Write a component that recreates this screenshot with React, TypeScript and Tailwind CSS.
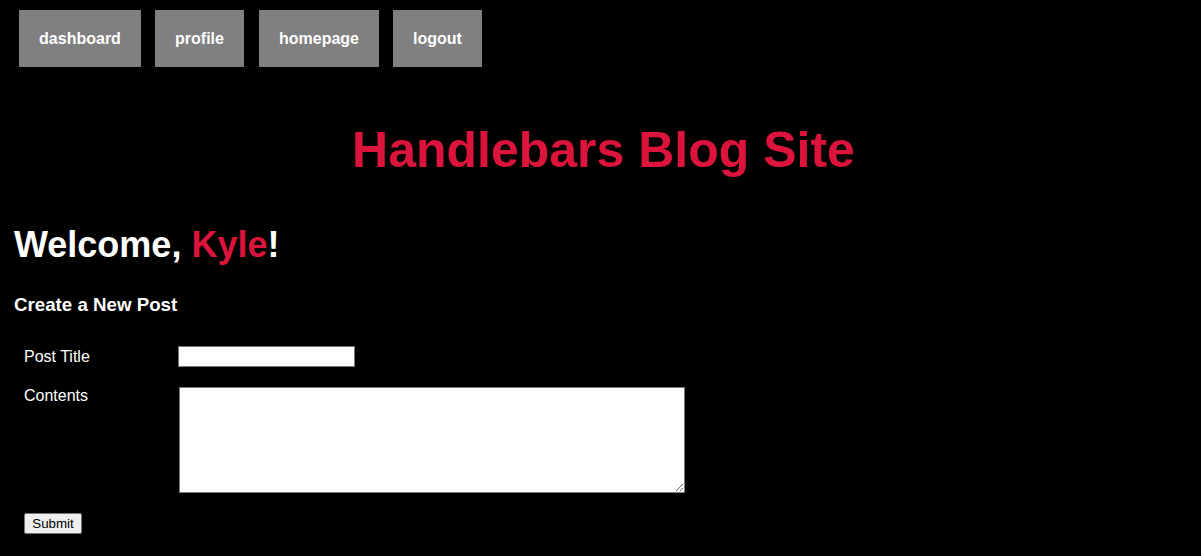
import React from "react";

export default function App() {
  const navs = [
    { label: "dashboard", c: "w-[122px]" },
    { label: "profile", c: "w-[89px] ml-[14px]" },
    { label: "homepage", c: "w-[120px] ml-[15px]" },
    { label: "logout", c: "w-[89px] ml-[14px]" },
  ];
  return (
    <div className="min-h-[556px] bg-black text-white font-['Liberation_Sans',Arial,sans-serif]">
      <nav className="flex pl-[19px] pt-[10px]">
        {navs.map((n) => (
          <a
            key={n.label}
            className={`${n.c} h-[57px] bg-[#808080] flex items-center justify-center text-[16px] font-bold text-white`}
          >
            {n.label}
          </a>
        ))}
      </nav>
      <h1 className="mt-[54px] pl-[6px] text-center text-[50px] font-bold leading-[58px] text-[#dc143c]">
        Handlebars Blog Site
      </h1>
      <h2 className="mt-[45px] pl-[14px] text-[36px] font-bold leading-[42px]">
        Welcome, <span className="text-[#dc143c]">Kyle</span>!
      </h2>
      <h3 className="mt-[28px] pl-[14px] text-[18.72px] font-bold leading-[22px]">
        Create a New Post
      </h3>
      <form className="mt-[30px] pl-[24px]">
        <div className="flex items-center">
          <label className="w-[154px] text-[16px] leading-[18px]">Post Title</label>
          <input
            type="text"
            className="w-[177px] h-[21px] bg-white border border-[#767676] text-black text-[13px] px-[2px]"
          />
        </div>
        <div className="flex mt-[20px]">
          <label className="w-[155px] text-[16px] leading-[18px]">Contents</label>
          <textarea className="w-[506px] h-[106px] bg-white border border-[#767676] text-black text-[13px] resize" />
        </div>
        <button
          type="button"
          className="mt-[20px] h-[21px] w-[58px] bg-[#efefef] border border-[#767676] rounded-[2px] text-black text-[13.33px] leading-[15px]"
        >
          Submit
        </button>
      </form>
    </div>
  );
}
